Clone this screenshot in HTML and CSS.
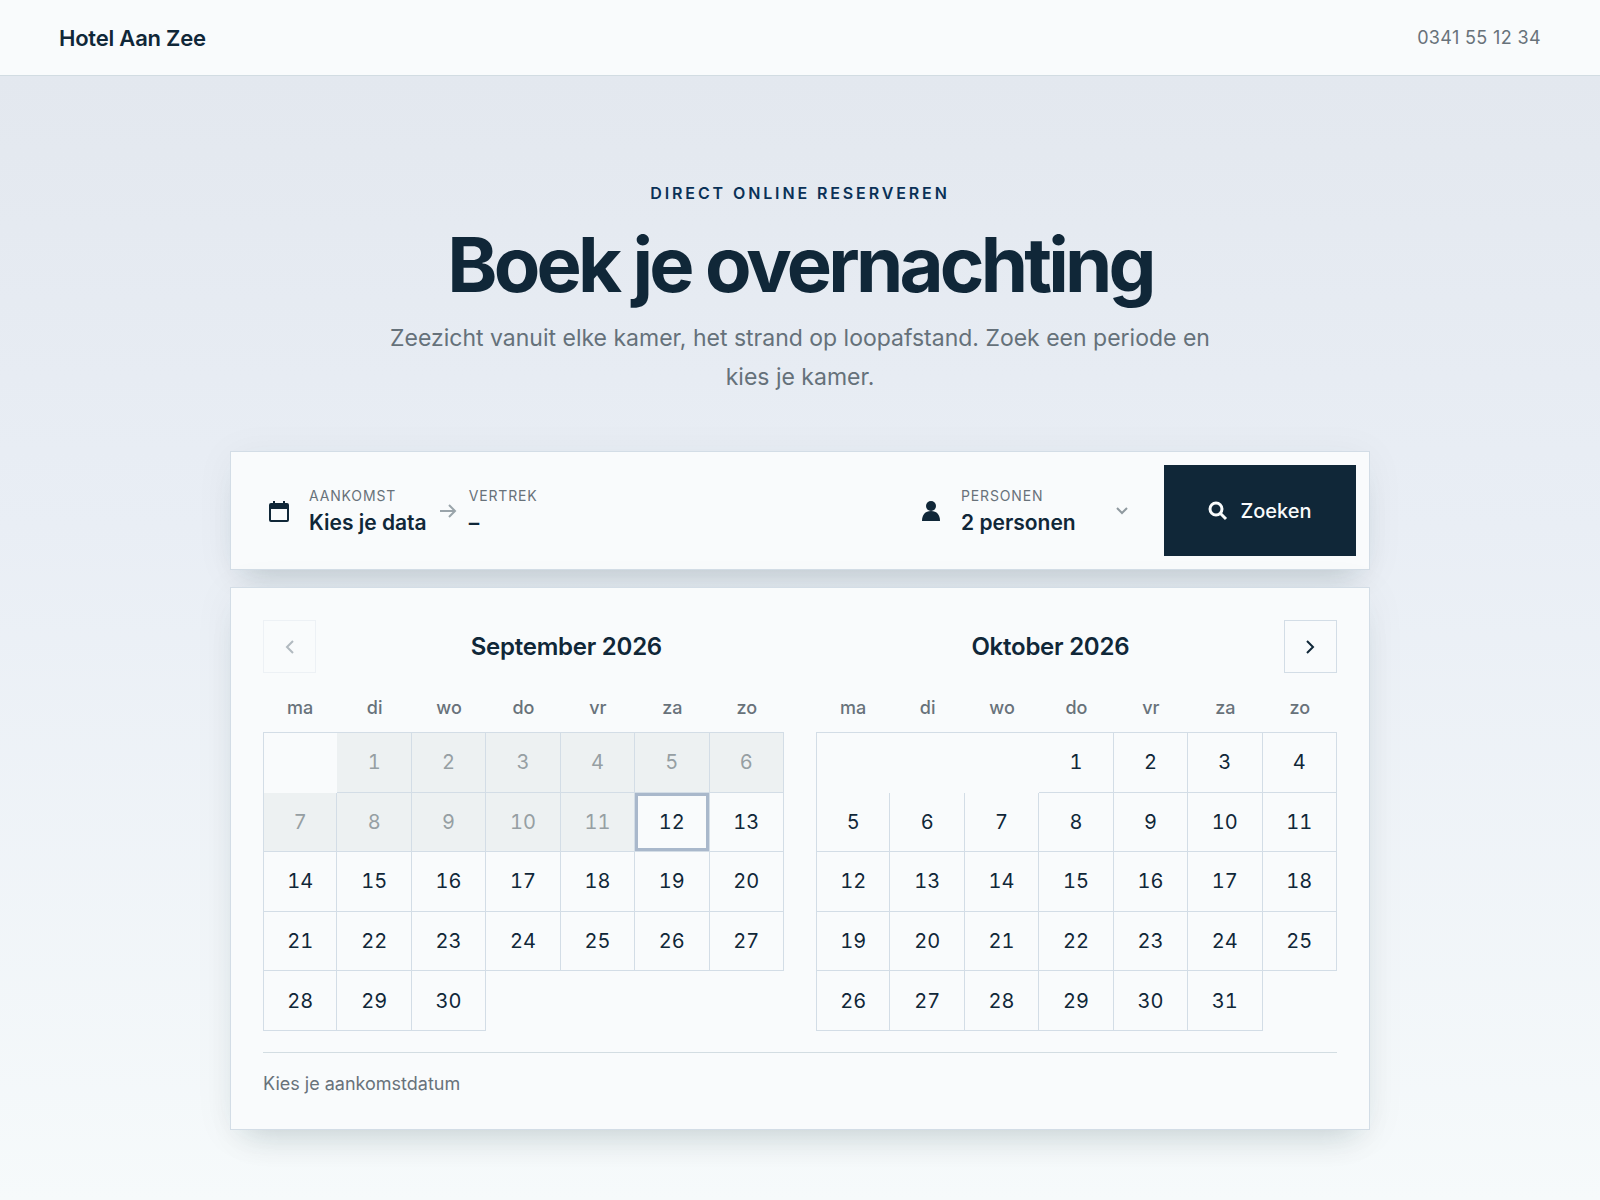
FILE: index.html
```html
<!DOCTYPE html>
<html lang="nl">
<head>
    <meta charset="utf-8">
    <meta name="viewport" content="width=device-width, initial-scale=1">
    <title>Hotel Aan Zee</title>
    <link rel="stylesheet" href="styles.css">
</head>
<body>

<header class="topbar">
    <a class="brand" href="#">Hotel Aan Zee</a>
    <a class="phone" href="tel:0341551234">0341 55 12 34</a>
</header>

<main class="hero">
    <div class="intro">
        <p class="eyebrow">Direct online reserveren</p>
        <h1>Boek je overnachting</h1>
        <p class="lead">Zeezicht vanuit elke kamer, het strand op loopafstand. Zoek een periode en kies je kamer.</p>
    </div>

    <form class="searchbar" action="#">
        <button type="button" class="dates">
            <svg class="icon" width="20" height="22" viewBox="0 0 20 22" aria-hidden="true">
                <path d="M5 1v4M15 1v4" fill="none" stroke="currentColor" stroke-width="2"/>
                <rect x="1" y="4" width="18" height="17" rx="1" fill="none" stroke="currentColor" stroke-width="2"/>
                <path d="M1 4h18v5H1z" fill="currentColor"/>
            </svg>
            <span class="field">
                <span class="label">Aankomst</span>
                <span class="value">Kies je data</span>
            </span>
            <svg class="arrow" width="18" height="14" viewBox="0 0 18 14" aria-hidden="true">
                <path d="M1 7h15M10 1l6 6-6 6" fill="none" stroke="currentColor" stroke-width="2"/>
            </svg>
            <span class="field">
                <span class="label">Vertrek</span>
                <span class="value">–</span>
            </span>
        </button>
        <div class="guests">
            <svg class="icon" width="20" height="20" viewBox="0 0 20 20" aria-hidden="true">
                <circle cx="10" cy="5" r="5" fill="currentColor"/>
                <path d="M1 20c0-6 3-10 9-10s9 4 9 10z" fill="currentColor"/>
            </svg>
            <div class="field">
                <label class="label" for="guests">Personen</label>
                <select class="value" id="guests">
                    <option>2 personen</option>
                </select>
            </div>
            <svg class="chevron" width="12" height="8" viewBox="0 0 12 8" aria-hidden="true">
                <path d="M1 1l5 5 5-5" fill="none" stroke="currentColor" stroke-width="2"/>
            </svg>
        </div>
        <button type="submit" class="search">
            <svg width="20" height="20" viewBox="0 0 20 20" aria-hidden="true">
                <circle cx="8" cy="8" r="6" fill="none" stroke="currentColor" stroke-width="3"/>
                <path d="M12 12l6 6" fill="none" stroke="currentColor" stroke-width="3"/>
            </svg>
            Zoeken
        </button>
    </form>

    <section class="picker">
        <div class="months">
            <button type="button" class="nav" aria-label="Vorige maand" disabled>
                <svg width="9" height="14" viewBox="0 0 9 14" aria-hidden="true">
                    <path d="M8 1L2 7l6 6" fill="none" stroke="currentColor" stroke-width="2"/>
                </svg>
            </button>
            <div class="names">
                <h2 id="sep">September 2026</h2>
                <h2 id="okt">Oktober 2026</h2>
            </div>
            <button type="button" class="nav" aria-label="Volgende maand">
                <svg width="9" height="14" viewBox="0 0 9 14" aria-hidden="true">
                    <path d="M1 1l6 6-6 6" fill="none" stroke="currentColor" stroke-width="2"/>
                </svg>
            </button>
        </div>

        <div class="calendars">
            <table class="calendar" aria-labelledby="sep">
                <thead>
                    <tr><th>ma</th><th>di</th><th>wo</th><th>do</th><th>vr</th><th>za</th><th>zo</th></tr>
                </thead>
                <tbody>
                    <tr>
                        <td class="empty"></td>
                        <td><button disabled>1</button></td>
                        <td><button disabled>2</button></td>
                        <td><button disabled>3</button></td>
                        <td><button disabled>4</button></td>
                        <td><button disabled>5</button></td>
                        <td><button disabled>6</button></td>
                    </tr>
                    <tr>
                        <td><button disabled>7</button></td>
                        <td><button disabled>8</button></td>
                        <td><button disabled>9</button></td>
                        <td><button disabled>10</button></td>
                        <td><button disabled>11</button></td>
                        <td><button class="today">12</button></td>
                        <td><button>13</button></td>
                    </tr>
                    <tr>
                        <td><button>14</button></td>
                        <td><button>15</button></td>
                        <td><button>16</button></td>
                        <td><button>17</button></td>
                        <td><button>18</button></td>
                        <td><button>19</button></td>
                        <td><button>20</button></td>
                    </tr>
                    <tr>
                        <td><button>21</button></td>
                        <td><button>22</button></td>
                        <td><button>23</button></td>
                        <td><button>24</button></td>
                        <td><button>25</button></td>
                        <td><button>26</button></td>
                        <td><button>27</button></td>
                    </tr>
                    <tr>
                        <td><button>28</button></td>
                        <td><button>29</button></td>
                        <td><button>30</button></td>
                    </tr>
                </tbody>
            </table>

            <table class="calendar" aria-labelledby="okt">
                <thead>
                    <tr><th>ma</th><th>di</th><th>wo</th><th>do</th><th>vr</th><th>za</th><th>zo</th></tr>
                </thead>
                <tbody>
                    <tr>
                        <td class="empty"></td>
                        <td class="empty"></td>
                        <td class="empty"></td>
                        <td><button>1</button></td>
                        <td><button>2</button></td>
                        <td><button>3</button></td>
                        <td><button>4</button></td>
                    </tr>
                    <tr>
                        <td><button>5</button></td>
                        <td><button>6</button></td>
                        <td><button>7</button></td>
                        <td><button>8</button></td>
                        <td><button>9</button></td>
                        <td><button>10</button></td>
                        <td><button>11</button></td>
                    </tr>
                    <tr>
                        <td><button>12</button></td>
                        <td><button>13</button></td>
                        <td><button>14</button></td>
                        <td><button>15</button></td>
                        <td><button>16</button></td>
                        <td><button>17</button></td>
                        <td><button>18</button></td>
                    </tr>
                    <tr>
                        <td><button>19</button></td>
                        <td><button>20</button></td>
                        <td><button>21</button></td>
                        <td><button>22</button></td>
                        <td><button>23</button></td>
                        <td><button>24</button></td>
                        <td><button>25</button></td>
                    </tr>
                    <tr>
                        <td><button>26</button></td>
                        <td><button>27</button></td>
                        <td><button>28</button></td>
                        <td><button>29</button></td>
                        <td><button>30</button></td>
                        <td><button>31</button></td>
                    </tr>
                </tbody>
            </table>
        </div>

        <p class="hint">Kies je aankomstdatum</p>
    </section>
</main>

</body>
</html>
```
FILE: styles.css
```css
* {
    box-sizing: border-box;
}
body {
    margin: 0;
    min-height: 100vh;
    display: flex;
    flex-direction: column;
    font-family: Inter, "Liberation Sans", sans-serif;
    color: #102738;
    background: #f6fafb;
}
h1, h2, p {
    margin: 0;
}
a {
    color: inherit;
    text-decoration: none;
}
button, select {
    margin: 0;
    padding: 0;
    border: 0;
    font: inherit;
    color: inherit;
    background: none;
    cursor: pointer;
}
svg {
    display: block;
    flex: none;
}

.topbar {
    display: flex;
    justify-content: space-between;
    align-items: center;
    height: 76px;
    padding: 0 59px;
    background: #f9fbfc;
    border-bottom: 1px solid #d2dce2;
}
.brand {
    font-size: 22px;
    font-weight: 600;
    letter-spacing: -0.01em;
}
.phone {
    font-size: 18px;
    letter-spacing: 0.02em;
    color: #68727a;
}

.hero {
    flex: 1;
    padding: 105px 32px 70px;
    background: linear-gradient(#e3e8ef, #e9eef5 40%, #f6fafb);
}
.intro {
    max-width: 832px;
    margin: 0 auto 54px;
    text-align: center;
}
.eyebrow {
    font-size: 16px;
    line-height: 24px;
    font-weight: 600;
    letter-spacing: 0.18em;
    text-transform: uppercase;
    color: #0a3157;
}
h1 {
    margin: 19px 0 15px;
    font-size: 76px;
    line-height: 80px;
    font-weight: 700;
    letter-spacing: -0.05em;
}
.lead {
    font-size: 23px;
    line-height: 39px;
    color: #65717a;
}

/* search bar */
.searchbar, .picker {
    max-width: 1140px;
    margin: 0 auto;
    background: #f9fbfc;
    border: 1px solid #d3dde6;
    box-shadow: 0 4px 40px rgba(16, 50, 56, 0.05), 0 20px 32px -16px rgba(16, 50, 56, 0.18);
}
.searchbar {
    display: flex;
    height: 119px;
    padding: 13px;
    margin-bottom: 17px;
}
.dates {
    flex: 1;
    display: flex;
    align-items: center;
    padding-left: 25px;
    text-align: left;
}
.icon {
    margin-right: 20px;
}
.field {
    display: flex;
    flex-direction: column;
    align-items: flex-start;
}
.label {
    font-size: 14px;
    line-height: 24px;
    letter-spacing: 0.06em;
    text-transform: uppercase;
    color: #68727a;
}
.value {
    font-size: 21px;
    line-height: 29px;
    font-weight: 600;
}
.arrow {
    margin: 0 12px;
    color: #9aa4aa;
}
.guests {
    display: flex;
    align-items: center;
    width: 243px;
    padding-right: 36px;
}
.guests select {
    appearance: none;
}
.chevron {
    margin-left: auto;
    color: #8f999f;
}
.search {
    display: flex;
    justify-content: center;
    align-items: center;
    gap: 12px;
    width: 192px;
    font-size: 20px;
    font-weight: 500;
    color: #f9fbfc;
    background: #102738;
}

/* date picker */
.picker {
    padding: 32px;
}
.months {
    display: flex;
    align-items: center;
}
.nav {
    display: flex;
    justify-content: center;
    align-items: center;
    width: 53px;
    height: 53px;
    border: 1px solid #d3dde6;
}
.nav:disabled {
    opacity: 0.3;
    cursor: default;
}
.names {
    flex: 1;
    display: flex;
    justify-content: space-around;
}
h2 {
    font-size: 24px;
    line-height: 32px;
    font-weight: 600;
    letter-spacing: -0.01em;
}
.calendars {
    display: grid;
    grid-template-columns: 1fr 1fr;
    gap: 32px;
    margin-top: 16px;
}
.calendar {
    width: 100%;
    height: 342px;
    table-layout: fixed;
    border-collapse: separate;
    border-spacing: 0;
}
.calendar th {
    height: 43px;
    padding: 0 0 6px;
    font-size: 18px;
    font-weight: 500;
    color: #68727a;
}
.calendar td {
    padding: 0;
    height: 59px;
    border-right: 1px solid #d3dde6;
    border-bottom: 1px solid #d3dde6;
}
.calendar td:first-child {
    border-left: 1px solid #d3dde6;
}
.calendar tbody tr:first-child td {
    height: 60px;
    border-top: 1px solid #d3dde6;
}
.calendar td.empty {
    border-right: 0;
    border-bottom: 0;
}
.calendar button {
    display: block;
    width: 100%;
    height: 100%;
    font-size: 20px;
    font-variant-numeric: tabular-nums;
}
.calendar button:disabled {
    color: #969fa3;
    background: #edf1f2;
    cursor: default;
}
.calendar button.today {
    border: 3px solid #a9b8cb;
}
.hint {
    margin-top: 21px;
    padding-top: 18px;
    border-top: 1px solid #d3dde2;
    font-size: 18px;
    line-height: 26px;
    color: #68727a;
}
```
